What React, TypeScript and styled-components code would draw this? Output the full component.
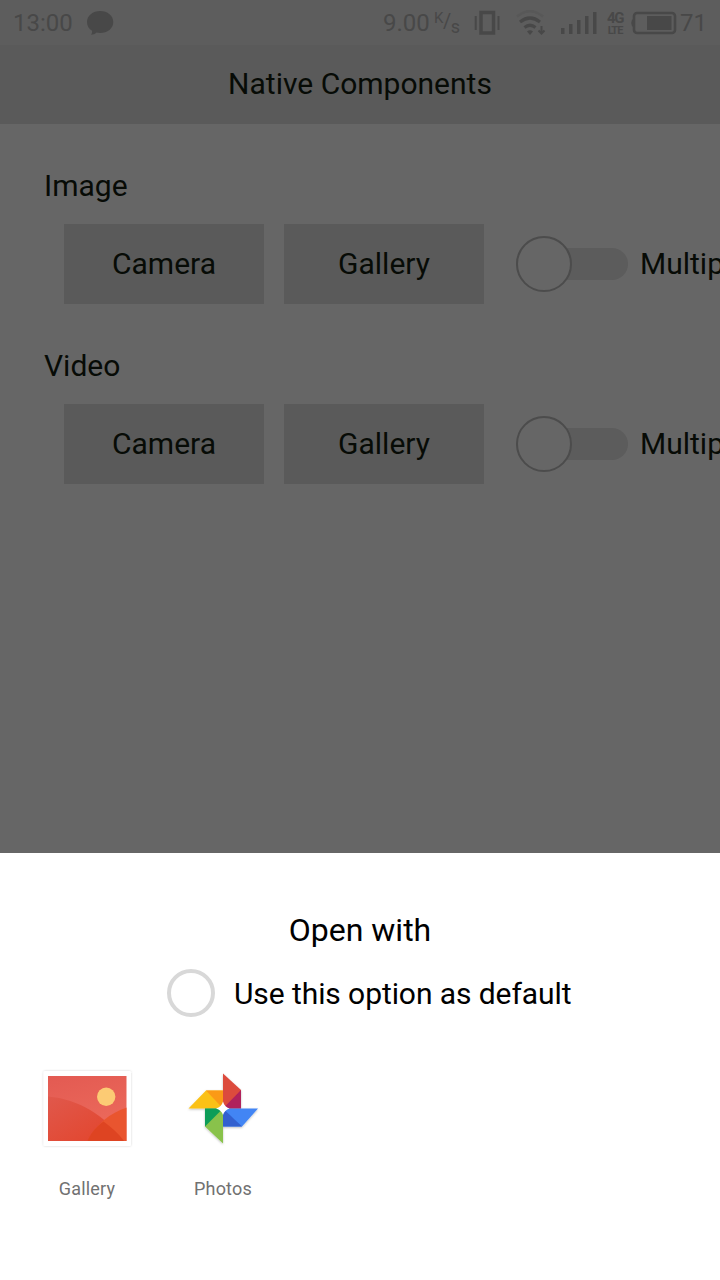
import React from 'react';
import styled, { createGlobalStyle } from 'styled-components';

const GlobalStyle = createGlobalStyle`
  * { box-sizing: border-box; }
  body { margin: 0; background: #666; font-family: Roboto, "Liberation Sans", sans-serif; }
`;

const Screen = styled.div`
  width: 720px;
  height: 1280px;
  display: flex;
  flex-direction: column;
  overflow: hidden;
  background: #666;
  color: #070b06;
`;

const StatusBar = styled.header`
  height: 45px;
  flex: none;
  display: flex;
  justify-content: space-between;
  padding: 0 14px 0 13px;
  background: #5d5d5d;
  color: #484848;
`;

const StatusGroup = styled.div`
  display: flex;
  align-items: center;
  height: 45px;
`;

const StatusText = styled.span<{ $w: number }>`
  width: ${(p) => p.$w}px;
  font-size: 24px;
  line-height: 44px;
  white-space: nowrap;
`;

const StatusIcon = styled.svg<{ $left?: number }>`
  display: block;
  flex: none;
  margin-left: ${(p) => p.$left ?? 0}px;
`;

const SpeedUnit = styled.span`
  display: flex;
  width: 26px;
  height: 28px;
  margin-left: 5px;
`;

const UnitPart = styled.span<{ $size: number; $top: number }>`
  font-size: ${(p) => p.$size}px;
  line-height: 18px;
  padding-top: ${(p) => p.$top}px;
  letter-spacing: -0.5px;
`;

const NetworkLabel = styled.span`
  display: flex;
  flex-direction: column;
  align-items: center;
  width: 16px;
  margin-left: 9px;
  padding-top: 3px;
  font-weight: 700;
  font-size: 15px;
  line-height: 14px;
  letter-spacing: -1.4px;
`;

const NetworkSub = styled.span`
  font-size: 11px;
  line-height: 12px;
  letter-spacing: -1px;
`;

const TitleBar = styled.div`
  height: 79px;
  flex: none;
  background: #5a5a5a;
  text-align: center;
  font-size: 30px;
  line-height: 78px;
`;

const Content = styled.main`
  flex: 1;
  padding-top: 40px;
`;

const Section = styled.section`
  height: 180px;
`;

const SectionTitle = styled.h2`
  margin: 0;
  padding-left: 44px;
  height: 60px;
  font-weight: 400;
  font-size: 30px;
  line-height: 44px;
`;

const Controls = styled.div`
  display: flex;
  align-items: center;
  padding-left: 64px;
  gap: 20px;
`;

const Button = styled.button`
  width: 200px;
  height: 80px;
  flex: none;
  padding: 0;
  border: 0;
  background: #5a5a5a;
  color: inherit;
  font: 400 30px/80px Roboto, "Liberation Sans", sans-serif;
`;

const SwitchField = styled.label`
  display: flex;
  align-items: center;
  gap: 12px;
  margin-left: 12px;
  font-size: 30px;
  line-height: 80px;
  white-space: nowrap;
`;

const Track = styled.span`
  display: flex;
  align-items: center;
  width: 112px;
  height: 32px;
  border-radius: 16px;
  background: #5c5c5c;
`;

const Thumb = styled.span`
  width: 56px;
  height: 56px;
  flex: none;
  border: 2px solid #4c4c4c;
  border-radius: 50%;
  background: #666;
`;

const Sheet = styled.div`
  height: 427px;
  flex: none;
  display: flex;
  flex-direction: column;
  background: #fff;
  color: #000;
`;

const SheetTitle = styled.h1`
  margin: 0;
  padding-top: 56px;
  font-weight: 400;
  font-size: 32px;
  line-height: 42px;
  text-align: center;
`;

const DefaultOption = styled.label`
  display: flex;
  align-items: center;
  height: 48px;
  margin-top: 18px;
  padding-left: 167px;
  gap: 19px;
  font-size: 30px;
  letter-spacing: -0.08px;
  white-space: nowrap;
`;

const Radio = styled.span`
  width: 48px;
  height: 48px;
  border: 4px solid #d8d8d8;
  border-radius: 50%;
`;

const AppList = styled.div`
  display: flex;
  padding: 43px 0 0 19px;
`;

const AppItem = styled.div`
  width: 136px;
  display: flex;
  flex-direction: column;
  align-items: center;
  gap: 21px;
  color: #717171;
  font-size: 18px;
  line-height: 24px;
  letter-spacing: 0.2px;
`;

const AppIcon = styled.svg`
  display: block;
  overflow: visible;
`;

const GalleryIcon = () => (
  <AppIcon width="96" height="96" viewBox="39 1060 96 96">
    <defs>
      <linearGradient id="sky" x1="0" y1="0" x2="0.3" y2="1">
        <stop offset="0" stopColor="#e35a52" />
        <stop offset="1" stopColor="#ec6b5c" />
      </linearGradient>
      <linearGradient id="hill" x1="0" y1="0" x2="1" y2="1">
        <stop offset="0" stopColor="#e0584c" />
        <stop offset="1" stopColor="#e34329" />
      </linearGradient>
      <filter id="frameShadow" x="-10%" y="-10%" width="120%" height="120%">
        <feDropShadow dx="0" dy="0" stdDeviation="1.2" floodOpacity="0.18" />
      </filter>
      <clipPath id="photo"><rect x="48" y="1076" width="78.5" height="65" /></clipPath>
    </defs>
    <rect x="43.5" y="1071" width="87.5" height="75" rx="1.5" fill="#fff" filter="url(#frameShadow)" />
    <g clipPath="url(#photo)">
      <rect x="48" y="1076" width="79" height="65" fill="url(#sky)" />
      <path d="M48 1096.5C79 1099 105 1116 124 1141H48Z" fill="url(#hill)" />
      <path d="M127 1107.5C110 1113 96 1124 87.5 1141H127Z" fill="#e9552f" />
      <path d="M103.5 1121.5C96 1127 91 1133 87.5 1141H124C118 1133 111 1127 103.5 1121.5Z" fill="#de4422" />
    </g>
    <circle cx="106.2" cy="1096.7" r="9.2" fill="#fccb74" />
  </AppIcon>
);

const PhotosIcon = () => (
  <AppIcon width="96" height="96" viewBox="175 1060 96 96">
    <defs>
      <filter id="pinShadow" x="-10%" y="-10%" width="120%" height="120%">
        <feDropShadow dx="0" dy="1" stdDeviation="0.8" floodOpacity="0.25" />
      </filter>
    </defs>
    <g filter="url(#pinShadow)">
      <path d="M223 1073.5L241 1090V1108.5H223Z" fill="#dc4b3e" />
      <path d="M223 1108.5L241 1090V1108.5Z" fill="#b0205c" />
      <path d="M188.5 1108.5L206 1090.5H223V1108.5Z" fill="#fbc116" />
      <path d="M206 1090.5H223V1108.5Z" fill="#fb9a18" />
      <path d="M223 1108.5H258L242 1126.5H223Z" fill="#4285f4" />
      <path d="M223 1108.5L242 1126.5H223Z" fill="#3060cf" />
      <path d="M205 1108.5H223V1143.5L205 1126.5Z" fill="#89c24c" />
      <path d="M205 1108.5H223L205 1126.5Z" fill="#109d58" />
    </g>
    <path d="M223 1101.500Q224.500 1107 229.500 1108.500Q224.500 1110 223 1115Q221.500 1110 216 1108.500Q221.500 1107 223 1101.500Z" fill="#fff" />
  </AppIcon>
);

const MediaSection = ({ title }: { title: string }) => (
  <Section>
    <SectionTitle>{title}</SectionTitle>
    <Controls>
      <Button>Camera</Button>
      <Button>Gallery</Button>
      <SwitchField>
        <Track><Thumb /></Track>
        Multiple
      </SwitchField>
    </Controls>
  </Section>
);

export default function App() {
  return (
    <Screen>
      <GlobalStyle />
      <StatusBar>
        <StatusGroup>
          <StatusText $w={73}>13:00</StatusText>
          <StatusIcon width="28" height="26" viewBox="86 9 28 26">
            <path d="M100.2 10C107.600 10 113.300 14.700 113.300 21C113.300 27.500 107.500 32 100 32C98.500 32 97.500 31.900 96.500 31.600C95 33 93.300 33.800 91 33.800C92 32.500 92.300 31.200 92 29.800C89 28 87 25 87 21C87 14.700 92.800 10 100.200 10Z" fill="currentColor" />
          </StatusIcon>
        </StatusGroup>
        <StatusGroup>
          <StatusText $w={46}>9.00</StatusText>
          <SpeedUnit>
            <UnitPart $size={15} $top={0}>K</UnitPart>
            <UnitPart $size={20} $top={3}>/</UnitPart>
            <UnitPart $size={18} $top={9}>s</UnitPart>
          </SpeedUnit>
          <StatusIcon $left={14} width="26" height="26" viewBox="474 9 26 26" fill="none" stroke="currentColor">
            <rect x="481" y="11.500" width="12.500" height="20.500" strokeWidth="3.500" />
            <path d="M475.700 15V29M498.500 15V29" strokeWidth="2" />
          </StatusIcon>
          <StatusIcon $left={16} width="32" height="28" viewBox="516 8 32 28" fill="none" stroke="currentColor">
            <path d="M517 15.500Q530 5 543 15.500" strokeWidth="2.500" opacity="0.2" />
            <path d="M520 21Q530 13 540 21M524.500 26.500Q530 22 535.500 26.500" strokeWidth="3.200" />
            <path d="M527 30.500Q530 28 533 30.500L530 34Z" fill="currentColor" stroke="none" />
            <path d="M541.500 25V32M538.500 29.500L541.500 32.500L544.500 29.500" strokeWidth="2" />
          </StatusIcon>
          <StatusIcon $left={12} width="38" height="26" viewBox="560 9 38 26" fill="currentColor">
            <path d="M561 27h3.500v6h-3.500zM569 23h3.500v10h-3.500zM577 19h3.500v14h-3.500zM585 15h3.500v18h-3.500zM593 11h3.500v22h-3.500z" />
          </StatusIcon>
          <NetworkLabel>4G<NetworkSub>LTE</NetworkSub></NetworkLabel>
          <StatusIcon $left={7} width="50" height="26" viewBox="630 9 50 26">
            <rect x="634" y="12" width="41" height="20" rx="3" fill="none" stroke="currentColor" strokeWidth="2.600" />
            <rect x="647" y="15" width="24.500" height="14" fill="currentColor" />
            <path d="M633 18.500H632Q630.500 22 632 25.500H633Z" fill="currentColor" />
          </StatusIcon>
          <StatusText $w={26}>71</StatusText>
        </StatusGroup>
      </StatusBar>
      <TitleBar>Native Components</TitleBar>
      <Content>
        <MediaSection title="Image" />
        <MediaSection title="Video" />
      </Content>
      <Sheet>
        <SheetTitle>Open with</SheetTitle>
        <DefaultOption><Radio />Use this option as default</DefaultOption>
        <AppList>
          <AppItem><GalleryIcon />Gallery</AppItem>
          <AppItem><PhotosIcon />Photos</AppItem>
        </AppList>
      </Sheet>
    </Screen>
  );
}
